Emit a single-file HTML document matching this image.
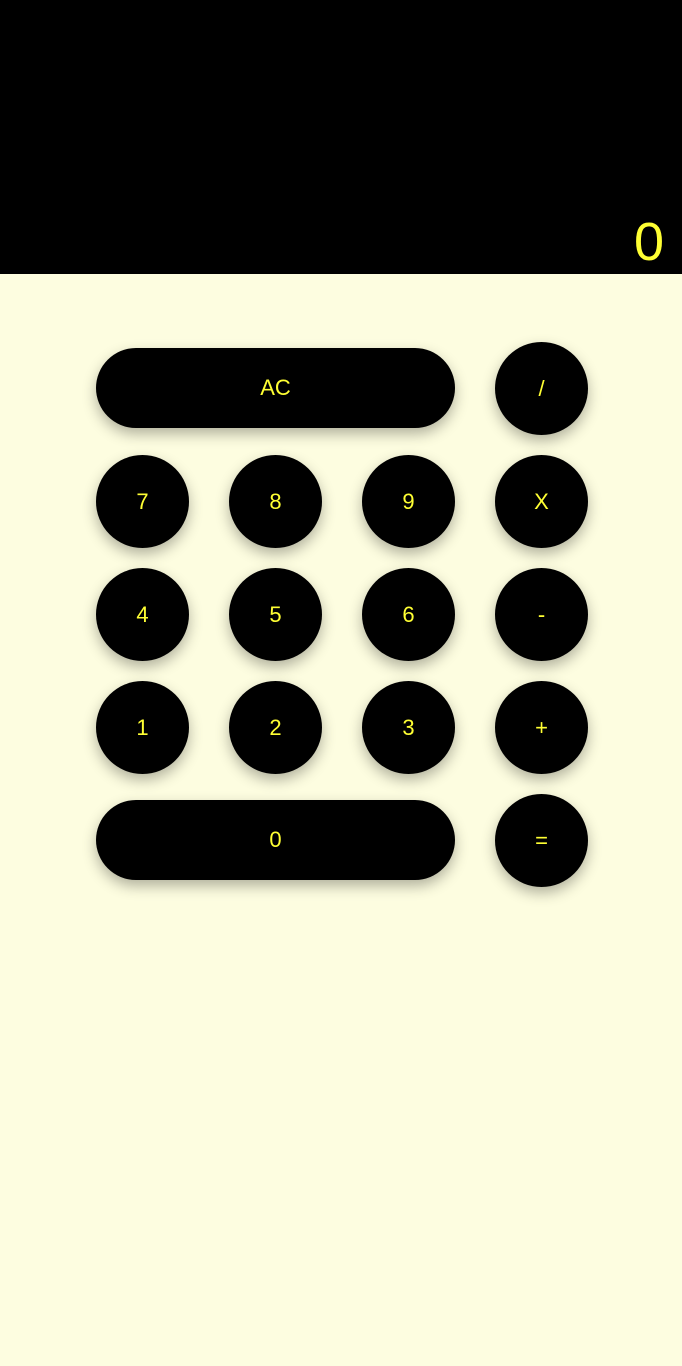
<!DOCTYPE html>
<html><head><meta charset="utf-8"><style>
html,body{margin:0;padding:0;width:682px;height:1366px;background:#fdfde0;font-family:"Liberation Sans",sans-serif;overflow:hidden}
.disp{position:absolute;left:0;top:0;width:682px;height:274px;background:#000}
.disp span{position:absolute;right:18px;top:212px;font-size:54px;color:#ffff33;line-height:60px}
.b{position:absolute;background:#000;color:#ffff33;font-size:22px;display:flex;align-items:center;justify-content:center;box-shadow:0 6px 14px rgba(0,0,0,0.3)}
.c{width:93px;height:93px;border-radius:50%}
.p{width:359px;height:80px;border-radius:40px}
</style></head><body>
<div class="disp"><span>0</span></div>
<div class="b p" style="left:96px;top:348px">AC</div>
<div class="b c" style="left:495px;top:342px">/</div>
<div class="b c" style="left:96px;top:455px">7</div>
<div class="b c" style="left:229px;top:455px">8</div>
<div class="b c" style="left:362px;top:455px">9</div>
<div class="b c" style="left:495px;top:455px">X</div>
<div class="b c" style="left:96px;top:568px">4</div>
<div class="b c" style="left:229px;top:568px">5</div>
<div class="b c" style="left:362px;top:568px">6</div>
<div class="b c" style="left:495px;top:568px">-</div>
<div class="b c" style="left:96px;top:681px">1</div>
<div class="b c" style="left:229px;top:681px">2</div>
<div class="b c" style="left:362px;top:681px">3</div>
<div class="b c" style="left:495px;top:681px">+</div>
<div class="b p" style="left:96px;top:800px">0</div>
<div class="b c" style="left:495px;top:794px">=</div>
</body></html>
